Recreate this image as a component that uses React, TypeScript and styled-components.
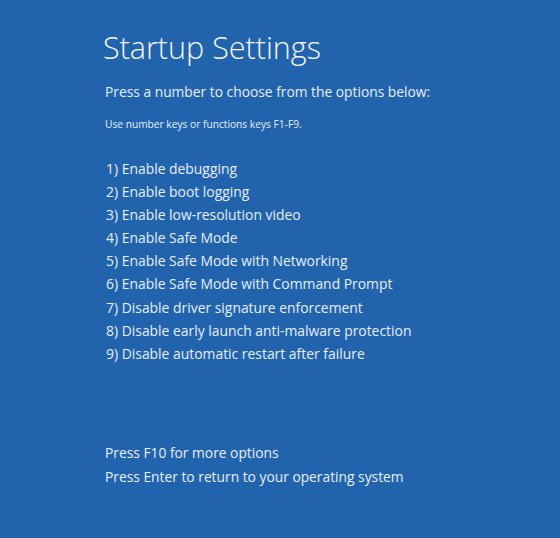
import React from "react";
import styled, { createGlobalStyle } from "styled-components";

const Global = createGlobalStyle`
  html, body { margin: 0; padding: 0; background: #2164ad; }
  body { width: 560px; height: 538px; overflow: hidden; }
`;

const Screen = styled.div`
  width: 560px;
  height: 538px;
  box-sizing: border-box;
  background: #2164ad;
  color: #e8eef8;
  font-family: "Open Sans", "Noto Sans", sans-serif;
  padding: 27px 0 0 103px;
  display: flex;
  flex-direction: column;
`;

const Title = styled.h1`
  margin: 0;
  font-weight: 300;
  font-size: 30.5px;
  line-height: 40px;
  color: #f4f7fc;
`;

const Subtitle = styled.p`
  margin: 15px 0 0 2px;
  font-size: 13.8px;
  line-height: 20px;
`;

const Hint = styled.p`
  margin: 15px 0 0 2px;
  font-size: 10.2px;
  line-height: 14px;
`;

const OptionList = styled.ol`
  list-style: none;
  margin: 26px 0 0 3px;
  padding: 0;
  display: flex;
  flex-direction: column;
`;

const Option = styled.li`
  font-size: 13.9px;
  line-height: 23.1px;
`;

const Footer = styled.div`
  margin-top: 76px;
  margin-left: 2px;
  display: flex;
  flex-direction: column;
`;

const FooterLine = styled.div`
  font-size: 13.8px;
  line-height: 24px;
`;

const options = [
  "Enable debugging",
  "Enable boot logging",
  "Enable low-resolution video",
  "Enable Safe Mode",
  "Enable Safe Mode with Networking",
  "Enable Safe Mode with Command Prompt",
  "Disable driver signature enforcement",
  "Disable early launch anti-malware protection",
  "Disable automatic restart after failure",
];

export default function App() {
  return (
    <>
      <Global />
      <Screen>
        <Title>Startup Settings</Title>
        <Subtitle>Press a number to choose from the options below:</Subtitle>
        <Hint>Use number keys or functions keys F1-F9.</Hint>
        <OptionList>
          {options.map((o, i) => (
            <Option key={o}>
              {i + 1}) {o}
            </Option>
          ))}
        </OptionList>
        <Footer>
          <FooterLine>Press F10 for more options</FooterLine>
          <FooterLine>Press Enter to return to your operating system</FooterLine>
        </Footer>
      </Screen>
    </>
  );
}
